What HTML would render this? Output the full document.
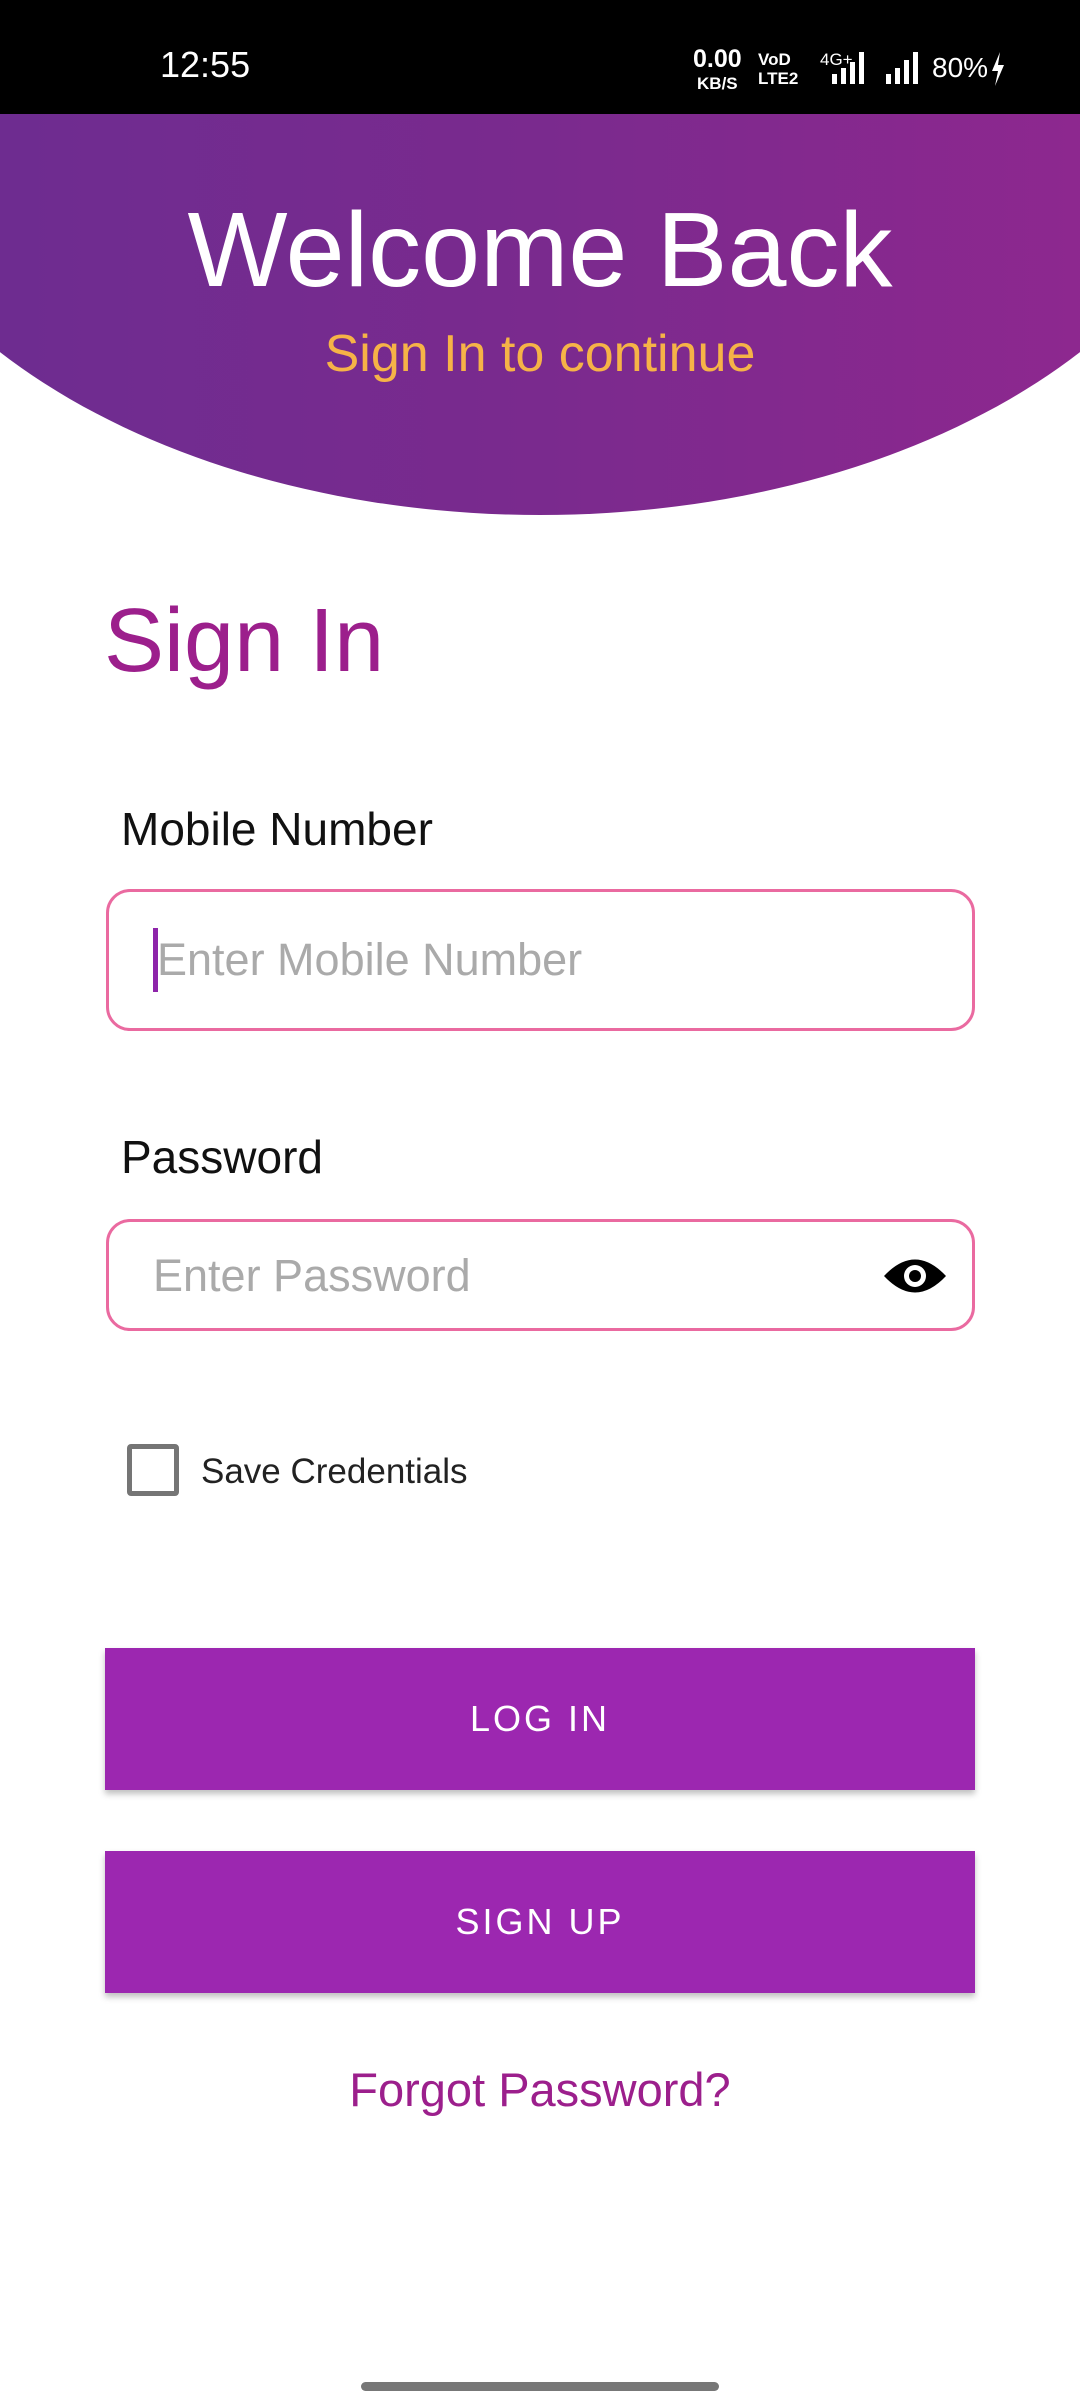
<!DOCTYPE html>
<html><head><meta charset="utf-8"><style>
*{margin:0;padding:0;box-sizing:border-box}
body{width:1080px;height:2400px;background:#fff;position:relative;overflow:hidden;font-family:"Liberation Sans",sans-serif}
.a{position:absolute;white-space:nowrap}
.sb{position:absolute;left:0;top:0;width:1080px;height:114px;background:#000;color:#fff;z-index:5}
.hdr{position:absolute;left:-160px;top:-381px;width:1400px;height:896px;border-radius:50%;background:linear-gradient(90deg,#6a2d91 0%,#7a2a8e 50%,#93278f 100%)}
.inp{position:absolute;left:106px;width:869px;border:3px solid #ea6aa0;border-radius:24px}
.btn{position:absolute;left:105px;width:870px;height:142px;background:#9c27b0;color:#fff;font-size:36px;letter-spacing:3px;text-align:center;line-height:142px;box-shadow:0 4px 6px rgba(0,0,0,.25)}
</style></head><body>
<div class="hdr"></div>
<div class="sb">
<div class="a" style="left:160px;top:44px;font-size:36px">12:55</div>
<div class="a" style="left:693px;top:48px;font-size:25px;font-weight:bold;line-height:22px;text-align:center">0.00<br><span style="font-size:17px">KB/S</span></div>
<div class="a" style="left:758px;top:50px;font-size:17px;font-weight:bold;line-height:19px">VoD<br>LTE2</div>
<div class="a" style="left:820px;top:50px;font-size:17px">4G+</div>
<svg class="a" style="left:830px;top:50px" width="40" height="34"><rect x="2" y="24" width="5" height="10" fill="#fff"/><rect x="11" y="18" width="5" height="16" fill="#fff"/><rect x="20" y="12" width="5" height="22" fill="#fff"/><rect x="29" y="2" width="5" height="32" fill="#fff"/></svg>
<svg class="a" style="left:884px;top:50px" width="40" height="34"><rect x="2" y="24" width="5" height="10" fill="#fff"/><rect x="11" y="18" width="5" height="16" fill="#fff"/><rect x="20" y="10" width="5" height="24" fill="#fff"/><rect x="29" y="2" width="5" height="32" fill="#fff"/></svg>
<div class="a" style="left:932px;top:52px;font-size:28px">80%</div>
<svg class="a" style="left:990px;top:52px" width="16" height="34"><path d="M10 0 L2 19 H8 L5 34 L14 13 H8 Z" fill="#fff"/></svg>
</div>
<div class="a" style="left:0;width:1080px;text-align:center;top:190px;font-size:106px;color:#fff">Welcome Back</div>
<div class="a" style="left:0;width:1080px;text-align:center;top:324px;font-size:52px;color:#f6b347">Sign In to continue</div>
<div class="a" style="left:104px;top:590px;font-size:90px;color:#9c1f8c">Sign In</div>
<div class="a" style="left:121px;top:802px;font-size:46px;color:#111">Mobile Number</div>
<div class="inp" style="top:889px;height:142px"></div>
<div class="a" style="left:153px;top:928px;width:5px;height:64px;background:#8e24aa"></div>
<div class="a" style="left:157px;top:934px;font-size:45px;color:#aaa">Enter Mobile Number</div>
<div class="a" style="left:121px;top:1130px;font-size:46px;color:#111">Password</div>
<div class="inp" style="top:1219px;height:112px"></div>
<div class="a" style="left:153px;top:1250px;font-size:45px;color:#aaa">Enter Password</div>
<svg class="a" style="left:882px;top:1255px" width="66" height="42" viewBox="0 0 66 42"><path d="M2 21 Q33 -12 64 21 Q33 54 2 21 Z" fill="#000"/><circle cx="33" cy="21" r="11" fill="#fff"/><circle cx="33" cy="21" r="6" fill="#000"/></svg>
<div class="a" style="left:127px;top:1444px;width:52px;height:52px;border:5px solid #757575;border-radius:4px"></div>
<div class="a" style="left:201px;top:1452px;font-size:35px;color:#222">Save Credentials</div>
<div class="btn" style="top:1648px">LOG IN</div>
<div class="btn" style="top:1851px">SIGN UP</div>
<div class="a" style="left:0;width:1080px;text-align:center;top:2062px;font-size:47px;color:#9c1f8c">Forgot Password?</div>
<div class="a" style="left:361px;top:2382px;width:358px;height:9px;border-radius:5px;background:#777"></div>
</body></html>
